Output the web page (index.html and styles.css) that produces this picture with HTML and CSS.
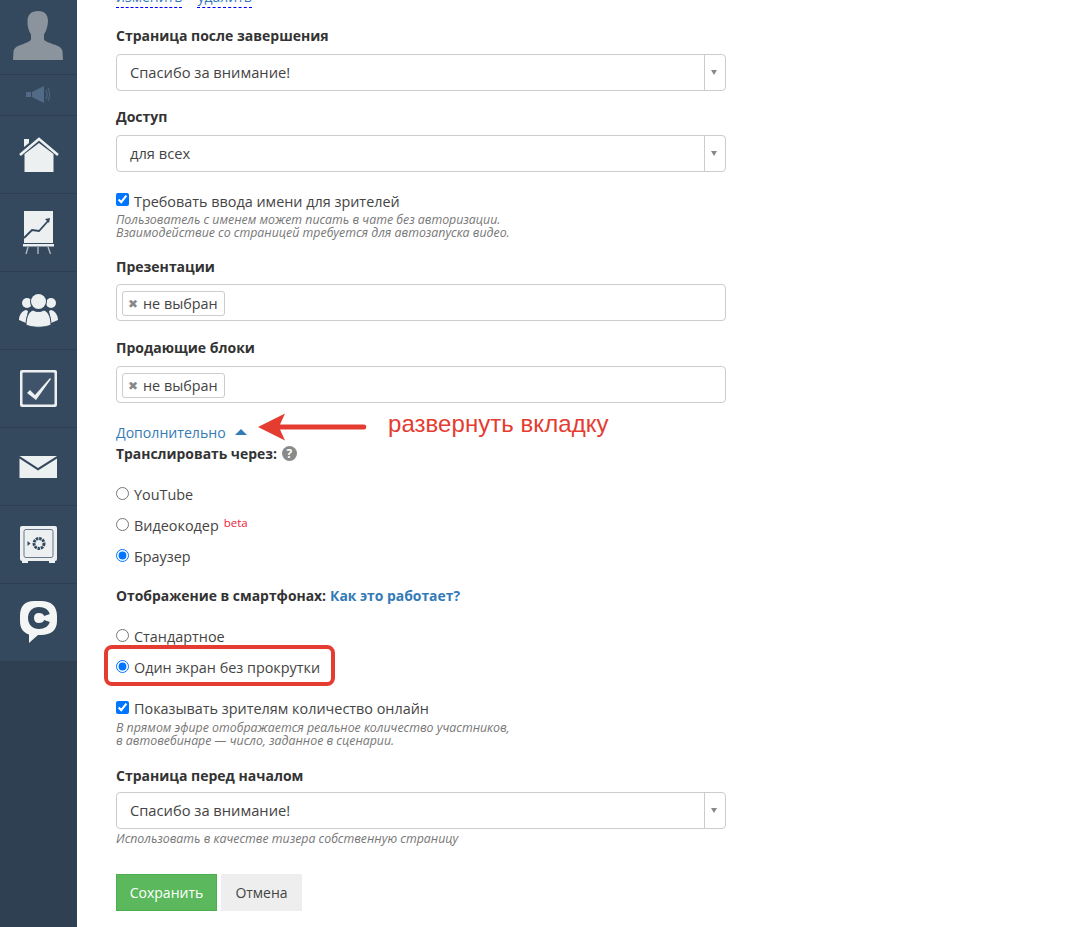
FILE: index.html
```html
<!DOCTYPE html>
<html lang="en">
<head>
    <meta charset="UTF-8">
    <title>Настройки вебинара</title>
    <meta name="viewport" content="width=device-width, initial-scale=1.0">
    <link rel="stylesheet" href="styles.css">
</head>
<body>
    <div class="layout">
        <nav class="sidebar">
            <div class="nav-list">
                <a class="nav-item nav-user">
                    <svg width="77" height="74" viewBox="0 0 77 74">
                        <path fill="#8b939c" d="M38 11c-7 0-10.500 4-10.500 10 0 3 .3 6 1 8 .6 2 1.500 4 2.500 5.500v5c-1 2-5 3.500-9 5-4.500 1.500-8 3-8.500 7l-.5 8.500h50l-.5-8.500c-.5-4-4-5.500-8.500-7-4-1.500-9-3-10-5v-5c1-1.500 2-3.500 2.500-5.500.7-2 1.500-5 1.500-8 0-6-3-10-10-10z"/>
                    </svg>
                </a>
                <a class="nav-item nav-sound">
                    <svg width="77" height="40" viewBox="0 75 77 40">
                        <rect x="26" y="92" width="5" height="5" fill="#516b86"/>
                        <path fill="#516b86" d="M32 92l12-6v17l-12-6z"/>
                        <path fill="none" stroke="#516b86" d="M46 90c1.500 3 1.500 6 0 9M48 88c2 4 2 9 0 13"/>
                    </svg>
                </a>
                <a class="nav-item">
                    <svg width="77" height="77" viewBox="0 116 77 77">
                        <path fill="#ecf0f1" d="M24.500 172v-18l14.500-11 14.500 11v18z"/>
                        <path fill="#ecf0f1" d="M24 139h5v4l-5 4z"/>
                        <path fill="none" stroke="#ecf0f1" stroke-width="2.600" d="M20 155l19-16 19 16"/>
                    </svg>
                </a>
                <a class="nav-item">
                    <svg width="77" height="77" viewBox="0 194 77 77">
                        <rect x="24" y="211" width="29" height="32" fill="#ecf0f1"/>
                        <path fill="none" stroke="#34495e" stroke-width="1.800" d="M24 238l8-8 7 1 9-10"/>
                        <path fill="#34495e" d="M45 219l5-1-1 5z"/>
                        <rect x="23" y="244" width="31" height="2.500" fill="#ecf0f1"/>
                        <path fill="none" stroke="#b5bfc8" stroke-width="1.300" d="M28 247l-2 7M38 247v7M48 247l2.500 7"/>
                    </svg>
                </a>
                <a class="nav-item">
                    <svg width="77" height="77" viewBox="0 272 77 77">
                        <circle cx="27" cy="303" r="5" fill="#ecf0f1"/>
                        <circle cx="51" cy="303" r="5" fill="#ecf0f1"/>
                        <path fill="#ecf0f1" d="M19 320c0-5 3-9 7-10l2 1c-1 4-2 9-2 12z"/>
                        <path fill="#ecf0f1" d="M58 320c0-5-3-9-7-10l-2 1c1 4 2 9 2 12z"/>
                        <circle cx="38.500" cy="301.500" r="8.500" fill="#34495e"/>
                        <circle cx="38.500" cy="301.500" r="7.500" fill="#ecf0f1"/>
                        <path fill="#ecf0f1" stroke="#34495e" d="M26 325c0-7 2-13 7-15 3 2 8 2 11 0 5 2 7 8 7 15-7 3-18 3-25 0z"/>
                    </svg>
                </a>
                <a class="nav-item">
                    <svg width="77" height="77" viewBox="0 350 77 77">
                        <rect x="20" y="370" width="37" height="37" rx="2" fill="#ecf0f1"/>
                        <rect x="22.500" y="372.500" width="32" height="32" rx="1" fill="#3f546b"/>
                        <path fill="#ecf0f1" d="M27 393l3-3 5 5 15-17 1 1-15 21z"/>
                    </svg>
                </a>
                <a class="nav-item">
                    <svg width="77" height="77" viewBox="0 428 77 77">
                        <path fill="#ecf0f1" d="M19.500 456h37.500l-19 12z"/>
                        <path fill="#ecf0f1" d="M19.500 458.500l18.500 12 19-12v19.500h-37.500z"/>
                    </svg>
                </a>
                <a class="nav-item">
                    <svg width="77" height="77" viewBox="0 506 77 77">
                        <rect x="20" y="526" width="37" height="35" rx="2" fill="#ecf0f1"/>
                        <path fill="#ecf0f1" d="M22 560h6v3h-6zM49 560h6v3h-6z"/>
                        <rect x="24" y="529.500" width="29" height="28" rx="2" fill="none" stroke="#66778a"/>
                        <circle cx="39" cy="543.500" r="5" fill="none" stroke="#34495e" stroke-width="3" stroke-dasharray="2.500 .8"/>
                        <path fill="#34495e" d="M27.500 541l3 2.500-3 2.500z"/>
                    </svg>
                </a>
                <a class="nav-item">
                    <svg width="77" height="77" viewBox="0 584 77 77">
                        <path fill="#f4f5f5" d="M34 601h7c10 0 16 5 16 15v5c0 9-6 14-16 14h-3l-9 8v-8.500c-6-2-9-6-9-13.500v-5c0-10 5-15 14-15z"/>
                        <path fill="none" stroke="#34495e" stroke-width="6" d="M47 615c-1-3-4-5-8-5-5 0-8 3-8 8s3 8 8 8c4 0 7-2 8-5"/>
                    </svg>
                </a>
            </div>
        </nav>

        <main class="content">
            <form class="form">
                <div class="links">
                    <a class="link-dashed">изменить</a>
                    <a class="link-dashed">удалить</a>
                </div>

                <h4 class="field-label first-label">Страница после завершения</h4>
                <div class="select"><span class="select-value">Спасибо за внимание!</span><span class="select-arrow"></span></div>

                <h4 class="field-label">Доступ</h4>
                <div class="select"><span class="select-value">для всех</span><span class="select-arrow"></span></div>

                <label class="option option-check">
                    <input type="checkbox" checked> Требовать ввода имени для зрителей
                </label>
                <p class="hint">Пользователь с именем может писать в чате без авторизации.<br>Взаимодействие со страницей требуется для автозапуска видео.</p>

                <h4 class="field-label label-tags">Презентации</h4>
                <div class="tags"><span class="tag"><span class="tag-x">✖</span>не выбран</span></div>

                <h4 class="field-label label-sales">Продающие блоки</h4>
                <div class="tags"><span class="tag"><span class="tag-x">✖</span>не выбран</span></div>

                <div class="more-row">
                    <a class="more-link">Дополнительно</a>
                    <span class="caret-up"></span>
                </div>

                <div class="inline-label">
                    <strong>Транслировать через:</strong>
                    <span class="help-icon">?</span>
                </div>

                <div class="radio-group">
                    <label class="option"><input type="radio" name="stream"> YouTube</label>
                    <label class="option"><input type="radio" name="stream"> Видеокодер <sup class="beta">beta</sup></label>
                    <label class="option"><input type="radio" name="stream" checked> Браузер</label>
                </div>

                <div class="inline-label label-mobile">
                    <strong>Отображение в смартфонах:</strong>
                    <a class="how-link">Как это работает?</a>
                </div>

                <div class="radio-group">
                    <label class="option"><input type="radio" name="mobile"> Стандартное</label>
                    <label class="option"><input type="radio" name="mobile" checked> Один экран без прокрутки</label>
                </div>

                <label class="option option-check option-online">
                    <input type="checkbox" checked> Показывать зрителям количество онлайн
                </label>
                <p class="hint hint-online">В прямом эфире отображается реальное количество участников,<br>в автовебинаре — число, заданное в сценарии.</p>

                <h4 class="field-label label-before">Страница перед началом</h4>
                <div class="select"><span class="select-value">Спасибо за внимание!</span><span class="select-arrow"></span></div>
                <p class="hint hint-after">Использовать в качестве тизера собственную страницу</p>

                <div class="buttons">
                    <button type="button" class="btn btn-save">Сохранить</button>
                    <button type="button" class="btn btn-cancel">Отмена</button>
                </div>
            </form>

            <!-- annotations on top of the screenshot -->
            <svg class="note-arrow" width="114" height="32" viewBox="0 0 114 32">
                <path fill="#e53c31" d="M2 16L29 2.500l-5 11h84c3 0 3 5 0 5H24l5 11z"/>
            </svg>
            <span class="note-text">развернуть вкладку</span>
            <div class="note-frame"></div>
        </main>
    </div>
</body>
</html>
```

FILE: styles.css
```css
html, body {
    margin: 0;
    height: 100%;
    overflow: hidden;
}
body {
    font-family: 'Open Sans', sans-serif;
    font-size: 14.4px;
    color: #333;
    background: #fff;
}
.layout {
    display: flex;
    height: 927px;
}

/* sidebar */
.sidebar {
    width: 77px;
    flex: none;
    background: #2e4052;
}
.nav-list {
    background: #34495e;
}
.nav-item {
    display: block;
    height: 77px;
    border-bottom: 1px solid #2c3e50;
}
.nav-item svg {
    display: block;
}
.nav-user {
    height: 74px;
}
.nav-sound {
    height: 40px;
}

/* form */
.content {
    position: relative;
    flex: 1;
    overflow: hidden;
}
.form {
    width: 610px;
    margin: -14px 0 0 39px;
}
.links {
    height: 22px;
    line-height: 22px;
    display: flex;
    gap: 15px;
    font-size: 14px;
}
.link-dashed {
    color: #337ab7;
    border-bottom: 1px dashed #00f;
    height: 21px;
}
.field-label {
    margin: 0;
    font-size: 14px;
    line-height: 20px;
    font-weight: 700;
    color: #333;
    padding-top: 16px;
    padding-bottom: 8px;
}
.first-label {
    padding-top: 18px;
    padding-bottom: 8px;
}
.select {
    display: flex;
    height: 37px;
    box-sizing: border-box;
    border: 1px solid #ccc;
    border-radius: 4px;
    align-items: stretch;
}
.select-value {
    flex: 1;
    padding-left: 13px;
    line-height: 35px;
    color: #444;
    font-size: 14.7px;
}
.select-arrow {
    width: 20px;
    border-left: 1px solid #ccc;
    position: relative;
}
.select-arrow::after {
    content: "";
    position: absolute;
    left: 6px;
    top: 15px;
    border-left: 3.5px solid transparent;
    border-right: 3.5px solid transparent;
    border-top: 5px solid #888;
}
.option {
    display: flex;
    align-items: center;
    gap: 5px;
    height: 31px;
    color: #444;
}
.option input {
    margin: 0;
    width: 13px;
    height: 13px;
    position: relative;
    top: -1.5px;
}
.option-check {
    height: 20px;
    margin-top: 19px;
}
.option-online {
    margin-top: 15.5px;
}
.hint {
    margin: 1.5px 0 0;
    font-size: 12.35px;
    line-height: 13px;
    font-style: italic;
    color: #777;
}
.hint-online {
    margin-top: 2.5px;
}
.label-tags {
    padding-top: 18.5px;
    padding-bottom: 7px;
}
.label-sales {
    padding-top: 17px;
}
.tags {
    height: 37px;
    box-sizing: border-box;
    border: 1px solid #ccc;
    border-radius: 4px;
    padding: 6px 5px 0;
}
.tag {
    display: inline-flex;
    align-items: center;
    height: 25px;
    box-sizing: border-box;
    border: 1px solid #ccc;
    border-radius: 3px;
    padding: 0 6px 0 5px;
    color: #444;
}
.tag-x {
    font-size: 12px;
    color: #888;
    margin-right: 5px;
}
.more-row {
    display: flex;
    align-items: center;
    margin-top: 19px;
    height: 20px;
}
.more-link {
    color: #337ab7;
    font-size: 14.100px;
}
.caret-up {
    margin-left: 9px;
    border-left: 6.500px solid transparent;
    border-right: 6.500px solid transparent;
    border-bottom: 6px solid #337ab7;
}
.inline-label {
    display: flex;
    align-items: center;
    gap: 5px;
    height: 22px;
    font-size: 13.9px;
}
.help-icon {
    width: 15px;
    height: 15px;
    border-radius: 50%;
    background: #8a8a8a;
    color: #fff;
    font-size: 12px;
    font-weight: 700;
    line-height: 15px;
    text-align: center;
}
.how-link {
    color: #337ab7;
    font-weight: 700;
    margin-left: -1px;
}
.radio-group {
    padding-top: 15px;
}
.beta {
    color: #ed1c40;
    font-size: 11.500px;
    line-height: 0;
    position: relative;
    top: -3px;
}
.label-mobile {
    margin-top: 12px;
}
.label-before {
    padding-top: 19px;
    padding-bottom: 6px;
}
.hint-after {
    margin-top: 3px;
}
.buttons {
    display: flex;
    gap: 4px;
    margin-top: 29px;
}
.btn {
    height: 37px;
    font-family: inherit;
    font-size: 14px;
    border: 1px solid transparent;
    padding: 0;
    border-radius: 0;
}
.btn-save {
    width: 101px;
    background: #5cb85c;
    border-color: #4cae4c;
    color: #fff;
}
.btn-cancel {
    width: 81px;
    background: #eee;
    color: #444;
}

/* annotations */
.note-arrow {
    position: absolute;
    left: 179px;
    top: 411px;
}
.note-text {
    position: absolute;
    left: 311px;
    top: 409px;
    font-family: 'Liberation Sans', sans-serif;
    font-size: 24px;
    line-height: 30px;
    color: #e53c31;
    letter-spacing: .05px;
}
.note-frame {
    position: absolute;
    left: 27px;
    top: 645px;
    width: 223px;
    height: 33px;
    border: 4px solid #e53c31;
    border-radius: 8px;
}
```
